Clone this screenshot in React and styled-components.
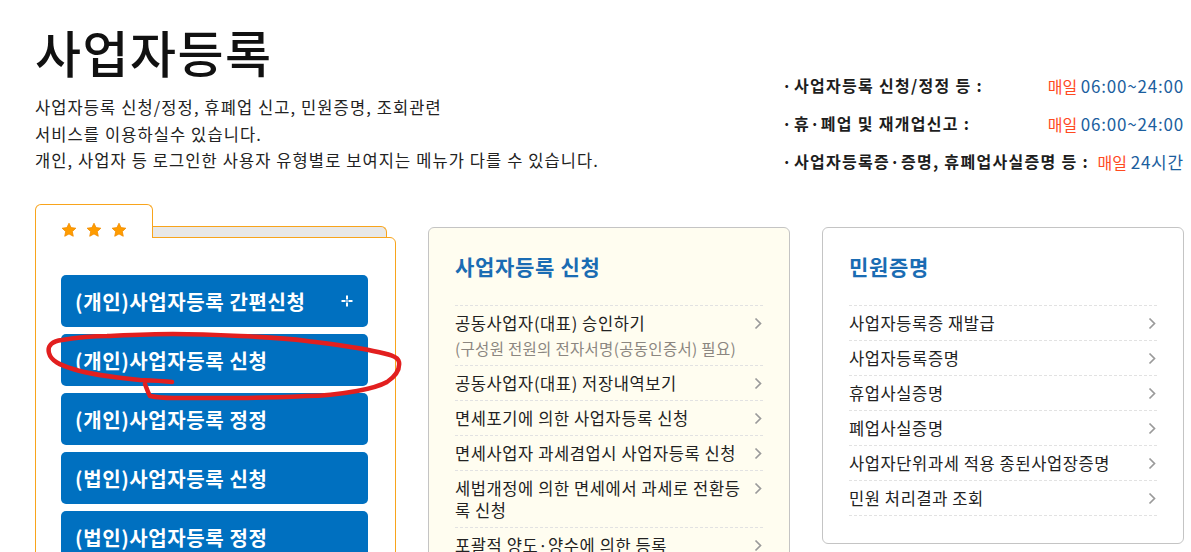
import styled, { createGlobalStyle } from "styled-components"

const GlobalStyle = createGlobalStyle`
    html, body {
        margin:0;
        padding:0;
        overflow:hidden;
        background:#ffffff;
    }
    body{
        font-family:"Noto Sans CJK KR", "Noto Sans", sans-serif;
        color:#222;
    }
`

const ORANGE = '#f8a41c'

const applyItems = [
    { text: '공동사업자(대표) 승인하기', sub: '(구성원 전원의 전자서명(공동인증서) 필요)' },
    { text: '공동사업자(대표) 저장내역보기' },
    { text: '면세포기에 의한 사업자등록 신청' },
    { text: '면세사업자 과세겸업시 사업자등록 신청' },
    { text: '세법개정에 의한 면세에서 과세로 전환등록 신청' },
    { text: '포괄적 양도·양수에 의한 등록' },
]

const certItems = [
    { text: '사업자등록증 재발급' },
    { text: '사업자등록증명' },
    { text: '휴업사실증명' },
    { text: '폐업사실증명' },
    { text: '사업자단위과세 적용 종된사업장증명' },
    { text: '민원 처리결과 조회' },
]

const hours = [
    { label: '사업자등록 신청/정정 등 :', time: '06:00~24:00' },
    { label: '휴·폐업 및 재개업신고 :', time: '06:00~24:00' },
    { label: '사업자등록증·증명, 휴폐업사실증명 등 :', time: '24시간' },
]

const buttons = [
    '(개인)사업자등록 간편신청',
    '(개인)사업자등록 신청',
    '(개인)사업자등록 정정',
    '(법인)사업자등록 신청',
    '(법인)사업자등록 정정',
]

function Star() {
    return (
        <svg width="16" height="16" viewBox="0 0 24 24">
            <path d="M12 1.8l3.1 6.6 7.2.9-5.3 5 1.4 7.1L12 17.9l-6.4 3.5 1.4-7.1-5.3-5 7.2-.9z" fill="#ff9c00" stroke="#f08c00" strokeWidth="1.2" strokeLinejoin="round" />
        </svg>
    )
}

function Plus() {
    return (
        <svg width="12" height="12" viewBox="0 0 12 12">
            <path d="M6 0.5v4M6 7.5v4M0.5 6h4M7.5 6h4" stroke="#fff" strokeWidth="2" />
            <circle cx="6" cy="6" r="0.9" fill="#cfe4f5" />
        </svg>
    )
}

function Chevron() {
    return (
        <svg width="8" height="13" viewBox="0 0 8 13">
            <polyline points="1.5,1.5 6.5,6.5 1.5,11.5" fill="none" stroke="#9a9a9a" strokeWidth="1.7" />
        </svg>
    )
}

// 빨간 손글씨 동그라미 (두번째 버튼 기준)
function Scribble() {
    return (
        <Mark viewBox="41 328 370 75" width="370" height="75">
            <path
                d="M172 381 C160 380 150 379 140 379 C110 376 85 372 73 368 C60 364 51 360 49 352 C47 344 53 340 62 339 C80 336 95 335 107 335 C130 334 150 333 173 333 C200 333 220 334 240 335 C265 336 285 337 307 340 C330 343 355 346 373 350 C388 353 398 355 399 361 C400 368 396 375 387 381 C378 386 368 388 357 390 C340 393 325 395 307 395 C285 396 260 397 240 397 C215 397 195 397 173 397 C163 397 155 396 150 395 C148 392 147 388 145 383"
                fill="none"
                stroke="#e21f1f"
                strokeWidth="4.5"
                strokeLinecap="round"
                strokeLinejoin="round"
            />
        </Mark>
    )
}

function ListCard({ title, items, bg }) {
    return (
        <Card $bg={bg}>
            <CardTitle>{title}</CardTitle>
            <List>
                {items.map((e, i) => (
                    <Item key={i}>
                        <div>
                            <ItemText>{e.text}</ItemText>
                            {e.sub && <SubText>{e.sub}</SubText>}
                        </div>
                        <Arrow><Chevron /></Arrow>
                    </Item>
                ))}
            </List>
        </Card>
    )
}

export default function App() {
    return (
        <Page>
            <GlobalStyle />
            <Header>
                <div>
                    <Title>사업자등록</Title>
                    <Desc>
                        사업자등록 신청/정정, 휴폐업 신고, 민원증명, 조회관련<br />
                        서비스를 이용하실수 있습니다.<br />
                        개인, 사업자 등 로그인한 사용자 유형별로 보여지는 메뉴가 다를 수 있습니다.
                    </Desc>
                </div>
                <Info>
                    {hours.map((h, i) => (
                        <InfoRow key={i}>
                            <Label><Dot>·</Dot>{h.label}</Label>
                            <Value><Red>매일</Red> <Time>{h.time}</Time></Value>
                        </InfoRow>
                    ))}
                </Info>
            </Header>
            <Main>
                <Folder>
                    <TabRow>
                        <Tab>
                            <Star /><Star /><Star />
                        </Tab>
                        <Strip />
                    </TabRow>
                    <FolderBody>
                        {buttons.map((b, i) => (
                            <BlueButton key={i}>
                                {b}
                                {i === 0 && <Plus />}
                                {i === 1 && <Scribble />}
                            </BlueButton>
                        ))}
                    </FolderBody>
                </Folder>
                <ListCard title="사업자등록 신청" items={applyItems} bg="#fffdf0" />
                <ListCard title="민원증명" items={certItems} bg="#ffffff" />
            </Main>
        </Page>
    )
}

const Page = styled.div`
    width:1191px;
    height:552px;
    overflow:hidden;
`
const Header = styled.div`
    height:204px;
    box-sizing:border-box;
    padding:23px 7px 0 35px;
    display:flex;
    justify-content:space-between;
    align-items:flex-start;
`
const Title = styled.h1`
    margin:0;
    font-size:50px;
    line-height:56px;
    font-weight:500;
    color:#111;
    letter-spacing:1.5px;
`
const Desc = styled.p`
    margin:15px 0 0;
    font-size:16.5px;
    line-height:26.5px;
    letter-spacing:1.1px;
    color:#222;
`
const Info = styled.div`
    margin-top:44px;
    width:402px;
    font-size:16px;
    line-height:37px;
`
const InfoRow = styled.div`
    display:flex;
    justify-content:space-between;
    gap:6px;
`
const Label = styled.div`
    font-weight:700;
    color:#1d1d1d;
    letter-spacing:1.3px;
`
const Dot = styled.span`
    display:inline-block;
    width:12px;
`
const Value = styled.div`
    color:#1b5e9e;
    white-space:nowrap;
`
const Red = styled.span`
    color:#ff4a1f;
`
const Time = styled.span`
    font-size:17px;
    letter-spacing:0.8px;
`
const Main = styled.div`
    display:flex;
    align-items:flex-start;
    gap:32px;
    padding-left:35px;
`
const Folder = styled.div`
    width:361px;
    flex-shrink:0;
`
const TabRow = styled.div`
    height:33px;
    display:flex;
    align-items:flex-end;
`
const Tab = styled.div`
    width:118px;
    height:34px;
    box-sizing:border-box;
    margin-bottom:-1px;
    position:relative;
    z-index:1;
    background:#fff;
    border:1px solid ${ORANGE};
    border-bottom:none;
    border-radius:6px 6px 0 0;
    display:flex;
    align-items:center;
    gap:9px;
    padding:16px 0 0 25px;
`
const Strip = styled.div`
    flex:1;
    height:10px;
    margin-right:9px;
    background:#e8e8e8;
    border-top:1px solid ${ORANGE};
    border-right:1px solid ${ORANGE};
    border-radius:0 6px 0 0;
`
const FolderBody = styled.div`
    border:1px solid ${ORANGE};
    border-radius:0 6px 0 0;
    padding:37px 27px 40px 25px;
    display:flex;
    flex-direction:column;
    gap:7px;
`
const BlueButton = styled.div`
    position:relative;
    height:52px;
    box-sizing:border-box;
    background:#0070c0;
    border-radius:5px;
    color:#fff;
    font-size:20px;
    font-weight:700;
    letter-spacing:0.6px;
    padding:0 15px 0 14px;
    display:flex;
    align-items:center;
    justify-content:space-between;
`
const Mark = styled.svg`
    position:absolute;
    left:-20px;
    top:-5px;
    overflow:visible;
    z-index:2;
    pointer-events:none;
`
const Card = styled.div`
    width:362px;
    flex-shrink:0;
    box-sizing:border-box;
    margin-top:23px;
    background:${props => props.$bg};
    border:1px solid #c4c4c4;
    border-radius:6px;
    padding:24px 26px 27px 26px;
`
const CardTitle = styled.h2`
    margin:0 0 25px;
    font-size:21px;
    line-height:28px;
    font-weight:700;
    color:#1a6cb3;
    letter-spacing:0.7px;
`
const List = styled.ul`
    list-style:none;
    margin:0;
    padding:0;
    border-top:1px dashed #e2e2e2;
`
const Item = styled.li`
    display:flex;
    justify-content:space-between;
    align-items:flex-start;
    gap:12px;
    padding:6px 1px 6px 0;
    border-bottom:1px dashed #e2e2e2;
`
const ItemText = styled.div`
    font-size:16.5px;
    line-height:22px;
    letter-spacing:0.6px;
    color:#222;
    word-break:break-all;
`
const SubText = styled.div`
    margin-top:3px;
    font-size:15.5px;
    line-height:22px;
    letter-spacing:0.3px;
    color:#8b8680;
`
const Arrow = styled.div`
    height:22px;
    display:flex;
    align-items:center;
    flex-shrink:0;
`
